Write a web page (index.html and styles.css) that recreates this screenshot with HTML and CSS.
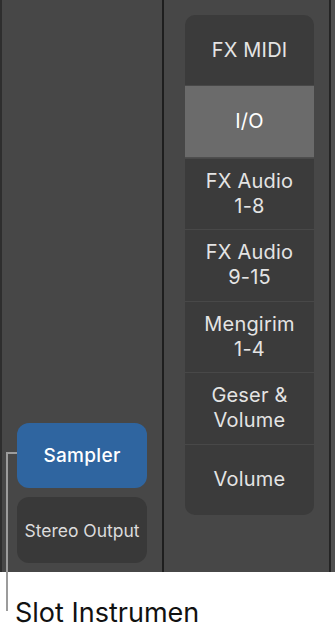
FILE: index.html
```html
<!DOCTYPE html>
<html lang="id">
<head>
  <meta charset="UTF-8" />
  <meta name="viewport" content="width=device-width, initial-scale=1.0" />
  <title>Slot Instrumen</title>
  <link rel="stylesheet" href="styles.css">
</head>
<body>
  <div class="screen">
    <div class="strip">
      <div class="slot instrument">Sampler</div>
      <div class="slot output">Stereo Output</div>
    </div>
    <div class="views">
      <div class="panel">
        <div class="row">FX MIDI</div>
        <div class="row active">I/O</div>
        <div class="row">FX Audio<br>1-8</div>
        <div class="row">FX Audio<br>9-15</div>
        <div class="row">Mengirim<br>1-4</div>
        <div class="row">Geser &amp;<br>Volume</div>
        <div class="row">Volume</div>
      </div>
    </div>
    <div class="edge"></div>
  </div>
  <div class="caption">Slot Instrumen</div>
  <div class="callout"></div>
</body>
</html>
```
FILE: styles.css
```css
body {
  margin: 0;
  width: 335px;
  height: 638px;
  background: #fff;
  font-family: Inter, "Liberation Sans", sans-serif;
  position: relative;
  overflow: hidden;
}
.screen {
  display: flex;
  height: 572px;
  background: #474747;
}
.strip {
  width: 130px;
  border-left: 2px solid #2e2e2e;
  border-right: 2px solid #1e1e1e;
  padding: 0 15px 9px 15px;
  display: flex;
  flex-direction: column;
  justify-content: flex-end;
  gap: 9px;
}
.slot {
  display: flex;
  align-items: center;
  justify-content: center;
  border-radius: 12px;
}
.instrument {
  height: 65px;
  background: #2f65a0;
  color: #fff;
  font-size: 19px;
  font-weight: 500;
  letter-spacing: 0.3px;
}
.output {
  height: 66px;
  background: #393939;
  color: #dcdcdc;
  font-size: 17.5px;
  letter-spacing: 0;
}
.views {
  flex: 1;
  padding: 15px 15px 0 21px;
  border-right: 2px solid #242424;
}
.edge {
  width: 4px;
  background: #505050;
}
.panel {
  height: 500px;
  background: #3b3b3b;
  border-radius: 10px;
  overflow: hidden;
  display: flex;
  flex-direction: column;
}
.row {
  flex: 1;
  display: flex;
  align-items: center;
  justify-content: center;
  text-align: center;
  color: #e4e4e4;
  font-size: 20px;
  line-height: 25px;
  letter-spacing: 0.2px;
  border-top: 1px solid #484848;
}
.row:first-child {
  border-top: none;
}
.row.active {
  background: #6b6b6b;
  color: #fff;
  border-bottom: 1px solid #4e4e4e;
}
.caption {
  padding: 25px 0 0 15px;
  font-size: 27px;
  line-height: 32px;
  color: #111;
}
.callout {
  position: absolute;
  left: 6px;
  top: 452px;
  width: 11px;
  height: 159px;
  border-left: 2px solid #9c9c9c;
  border-top: 2px solid #9c9c9c;
  box-sizing: border-box;
}
```
